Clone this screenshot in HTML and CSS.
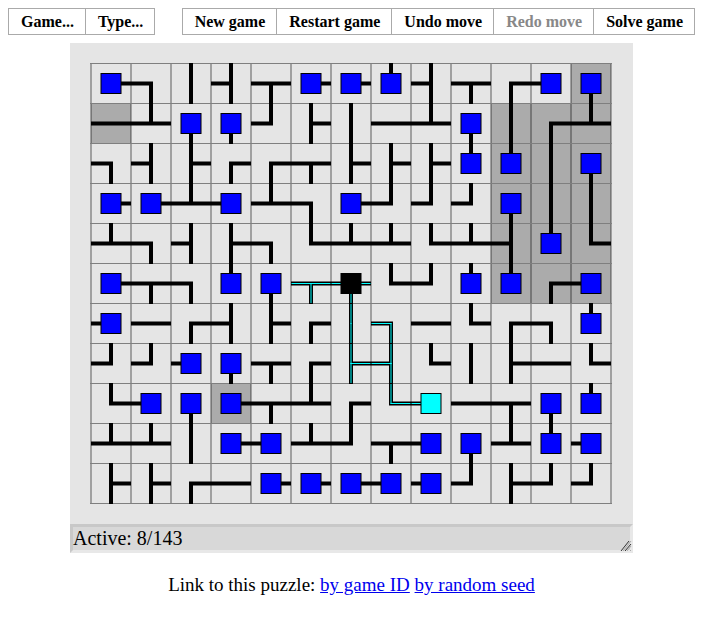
FILE: index.html
```
<!DOCTYPE html>
<html lang="en">
<head>
	<meta charset="utf-8">
	<meta name="viewport" content="width=device-width, initial-scale=1">
	<title>Net</title>
	<link rel="stylesheet" href="styles.css">
</head>
<body>
	<nav class="menu">
		<div class="menu-group">
			<button type="button" class="menu-btn">Game...</button>
			<button type="button" class="menu-btn">Type...</button>
		</div>
		<div class="menu-group">
			<button type="button" class="menu-btn">New game</button>
			<button type="button" class="menu-btn">Restart game</button>
			<button type="button" class="menu-btn">Undo move</button>
			<button type="button" class="menu-btn" disabled>Redo move</button>
			<button type="button" class="menu-btn">Solve game</button>
		</div>
	</nav>

	<main class="puzzle">
		<svg id="board" class="board" viewBox="0 0 563 481" role="img" aria-label="Net puzzle"></svg>
		<div class="statusbar">
			<span id="status">Active: 8/143</span>
			<svg class="resize-handle" viewBox="0 0 12 12" aria-hidden="true">
				<path class="grip-light" d="M3 11L11 1M7 11L11 6M10 11L11 10"/>
				<path class="grip-dark" d="M1 11L9 1M5 11L11 4"/>
			</svg>
		</div>
	</main>

	<p class="links">Link to this puzzle: <a href="#game-id">by game ID</a> <a href="#seed">by random seed</a></p>

	<script src="board.js"></script>
</body>
</html>
```
FILE: styles.css
```
body {
	margin: 8px;
	background-color: white;
	color: black;
	font-family: "Liberation Serif", "Times New Roman", serif;
	font-size: 20px;
}

/* Menu */
.menu {
	display: flex;
	justify-content: space-between;
	max-width: 687px;
	margin: 0 auto;
}

.menu-group {
	display: flex;
	border-left: 1px solid #aaa;
}

.menu-btn {
	box-sizing: border-box;
	height: 27px;
	margin: 0;
	padding: 0 11px 0 12px;
	border: 1px solid #aaa;
	border-left: none;
	background-color: white;
	color: black;
	font-family: inherit;
	font-size: 16px;
	font-weight: bold;
	white-space: nowrap;
}

.menu-btn:disabled {
	color: #888;
}

/* Puzzle */
.puzzle {
	max-width: 563px;
	margin: 8px auto 0;
}

.board {
	display: block;
	width: 100%;
	background-color: #e5e5e5;
}

.locked {
	fill: #ababab;
}

.grid-h, .grid-v {
	stroke: #7f7f7f;
	stroke-width: 1;
	fill: none;
}

.grid-v {
	stroke: black;
	stroke-opacity: 0.3;
	stroke-width: 2;
}

.wire {
	stroke: black;
	stroke-width: 4;
	fill: none;
}

.live {
	stroke: cyan;
	stroke-width: 1;
	stroke-linecap: square;
	fill: none;
}

.box {
	fill: blue;
	stroke: black;
	stroke-width: 1;
}

.box-live {
	fill: cyan;
}

.box-source {
	fill: black;
}

/* Status bar */
.statusbar {
	display: flex;
	justify-content: space-between;
	align-items: flex-end;
	border: 3px solid;
	border-color: #c8c8c8 #e8e8e8 #e8e8e8 #c8c8c8;
	background-color: #d8d8d8;
	line-height: 23px;
}

.resize-handle {
	width: 12px;
	height: 12px;
	margin: 0 -2px -2px 0;
}

.grip-light, .grip-dark {
	fill: none;
	stroke: #aaa;
}

.grip-dark {
	stroke: #333;
}

/* Links */
.links {
	margin: 20px 0;
	text-align: center;
	font-size: 19px;
	line-height: 23px;
}

.links a {
	color: #0000ee;
}
```
FILE: board.js
```
/* One hex digit per tile: 1 = right, 2 = up, 4 = left, 8 = down */
const tiles = [
	'1CAED112ED948',
	'57886BA578A97',
	'CEB99DBBB22A8',
	'11747C16668AA',
	'7CEBC37737E23',
	'1DC28DD362294',
	'459EB9AC539C2',
	'6648D9BE3AB53',
	'3481D79345D82',
	'77A1476D48724',
	'BB95111446B66'
];

/* column,row lists */
const source = '6,5';
const active = ['5,5', '6,5', '6,6', '7,6', '6,7', '7,7', '7,8', '8,8'];
const locked = ['12,0', '0,1', '3,8'];
for (let y = 1; y <= 5; y++) {
	for (let x = 10; x <= 12; x++) {
		locked.push(x + ',' + y);
	}
}

const size = 40, left = 21, top0 = 20.5;
const cols = tiles[0].length, rows = tiles.length;
const board = document.querySelector('#board');

function rect(cls, x, y, s) {
	return `<rect class="${cls}" x="${x}" y="${y}" width="${s}" height="${s}"/>`;
}

let back = '', gridH = '', gridV = '', wires = '', live = '', boxes = '';

for (let x = 0; x <= cols; x++) {
	gridV += `M${left + x * size} ${top0 - 0.5}v${rows * size + 1}`;
}
for (let y = 0; y <= rows; y++) {
	gridH += `M${left - 1} ${top0 + y * size}h${cols * size + 2}`;
}

for (let y = 0; y < rows; y++) {
	for (let x = 0; x < cols; x++) {
		const key = x + ',' + y;
		const code = parseInt(tiles[y][x], 16);
		const cx = left + x * size + size / 2;
		const cy = top0 + y * size + size / 2;
		/* Each arm starts just past the centre so corners are filled */
		let path = '';

		if (code & 1) path += `M${cx - 2} ${cy}h22`;
		if (code & 2) path += `M${cx} ${cy + 1.5}v-22`;
		if (code & 4) path += `M${cx + 2} ${cy}h-22`;
		if (code & 8) path += `M${cx} ${cy - 1.5}v22`;
		wires += path;

		if (active.includes(key)) {
			if (code & 1) live += `M${cx} ${cy}h19`;
			if (code & 2) live += `M${cx} ${cy}v-19`;
			if (code & 4) live += `M${cx} ${cy}h-19`;
			if (code & 8) live += `M${cx} ${cy}v19`;
		}

		if (locked.includes(key)) back += rect('locked', cx - size / 2, cy - size / 2, size);

		/* Endpoints have a single connection */
		if (key === source) {
			boxes += rect('box box-source', cx - 10, cy - 10, 20);
		} else if ([1, 2, 4, 8].includes(code)) {
			boxes += rect(active.includes(key) ? 'box box-live' : 'box', cx - 10, cy - 10, 20);
		}
	}
}

board.innerHTML = back +
	`<path class="grid-v" d="${gridV}"/>` +
	`<path class="grid-h" d="${gridH}"/>` +
	`<path class="wire" d="${wires}"/>` +
	`<path class="live" d="${live}"/>` + boxes;
```
